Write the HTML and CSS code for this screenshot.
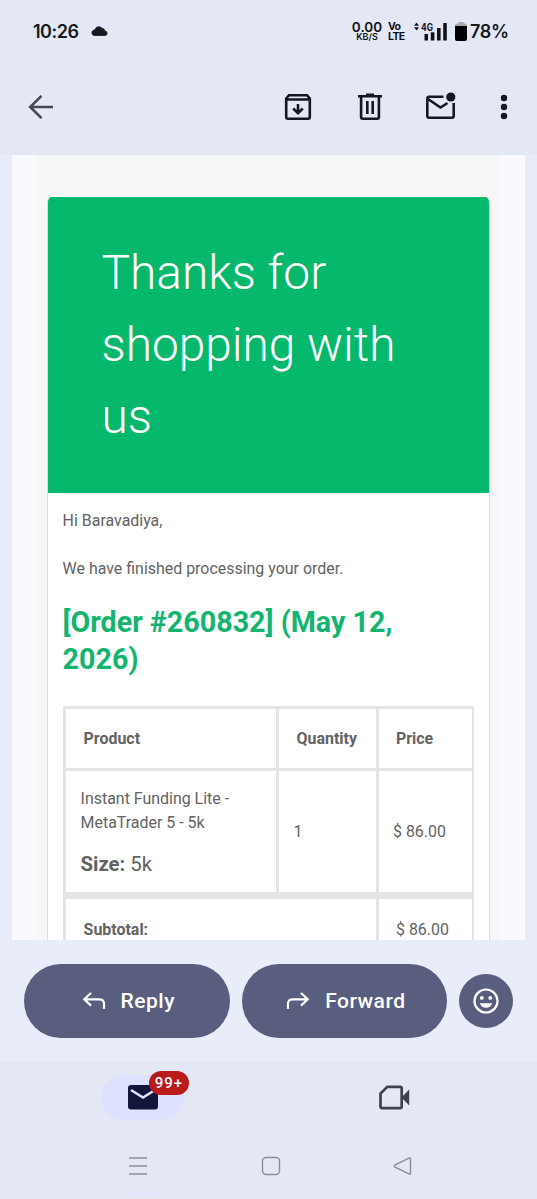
FILE: index.html
```html
<!DOCTYPE html>
<html lang="en">
<head>
<meta charset="utf-8">
<title>Mail</title>
<link rel="stylesheet" href="styles.css">
</head>
<body>
<div class="screen">
  <header class="top">
    <div class="status">
      <span class="clock">10:26</span>
      <svg class="cloud" width="17" height="10" viewBox="0 0 17 10"><path d="M3 9.500A2.800 2.800 0 0 1 2.600 4.200C3 4 3.500 3.900 3.900 3.900A4 4 0 0 1 11 2.300C12.600 2.300 13.600 3.500 13.800 5A2.300 2.300 0 0 1 14.500 9.500Z" fill="#16191d" stroke="#16191d" stroke-width=".8"/></svg>
      <div class="net"><span class="rate">0.00</span><span class="unit">KB/S</span></div>
      <div class="volte"><span>Vo</span><span>LTE</span></div>
      <svg class="signal" width="34" height="20" viewBox="0 0 34 20"><g fill="#101216"><path d="M0 4.700 2.500 1.400 5 4.700ZM0 6.200 2.500 9.500 5 6.200Z"/><rect x="10.500" y="13" width="3.500" height="6.500"/><rect x="16.800" y="11.300" width="3.600" height="8.200"/><rect x="23" y="7" width="3.600" height="12.500"/><rect x="29.200" y="2" width="3.600" height="17.500"/></g><text class="gen" x="7" y="9.500" textLength="12" lengthAdjust="spacingAndGlyphs">4G</text></svg>
      <svg class="battery" width="12" height="19" viewBox="0 0 12 19"><path d="M3.500 0h5v1.500H10a2 2 0 0 1 2 2V5H0V3.500a2 2 0 0 1 2-2h1.500Z" fill="#a5a7af"/><path d="M0 4h12V17a2 2 0 0 1-2 2H2a2 2 0 0 1-2-2Z" fill="#000"/></svg>
      <span class="percent">78%</span>
    </div>
    <nav class="actions">
      <svg class="back" width="26" height="26" viewBox="0 0 26 26" fill="none" stroke="#444956" stroke-width="2.600"><path d="M25 13H2.500M13.500 1.800 2.200 13 13.500 24.200"/></svg>
      <svg class="archive" width="28" height="28" viewBox="0 0 28 28" fill="none" stroke="#131721" stroke-width="2.600"><path d="M2.200 5.500 5 2.200h18l2.800 3.300V24q0 1.700-1.700 1.700H3.900Q2.200 25.700 2.200 24ZM2.200 6.500h23.600M14 11v9M9.200 15.500 14 20.200l4.800-4.700"/></svg>
      <svg class="trash" width="24" height="28" viewBox="0 0 24 28" fill="none" stroke="#131721" stroke-width="2.600"><path d="M0 3.200h24M8 1.800h8M3.100 3.200V24q0 1.700 1.700 1.700h14.400q1.700 0 1.700-1.700V3.200M9.300 8v13M14.700 8v13"/></svg>
      <svg class="unread" width="31" height="28" viewBox="0 0 31 28"><path d="M18.500 4.700H4q-1.700 0-1.700 1.700V24q0 1.700 1.700 1.700h23q1.700 0 1.700-1.700V11M3 7l12.500 8.500 7-4.500" fill="none" stroke="#131721" stroke-width="2.600"/><circle cx="25.800" cy="5" r="4.600" fill="#131721"/></svg>
      <svg class="more" width="8" height="26" viewBox="0 0 8 26" fill="#131721"><circle cx="4" cy="4" r="3.200"/><circle cx="4" cy="13" r="3.200"/><circle cx="4" cy="22" r="3.200"/></svg>
    </nav>
  </header>

  <main class="message">
    <div class="backdrop">
      <article class="card">
        <h1 class="banner">Thanks for shopping with us</h1>
        <div class="body">
          <p>Hi Baravadiya,</p>
          <p>We have finished processing your order.</p>
          <h2 class="order">[Order #260832] (May 12, 2026)</h2>
          <div class="table">
            <div class="row head"><div class="cell product">Product</div><div class="cell qty">Quantity</div><div class="cell price">Price</div></div>
            <div class="row item"><div class="cell product"><div>Instant Funding Lite - MetaTrader 5 - 5k</div><div class="size"><b>Size:</b> 5k</div></div><div class="cell qty">1</div><div class="cell price">$ 86.00</div></div>
            <div class="row total"><div class="cell label">Subtotal:</div><div class="cell price">$ 86.00</div></div>
          </div>
        </div>
      </article>
    </div>
  </main>

  <div class="replybar">
    <button class="pill"><svg width="24" height="20" viewBox="0 0 24 20" fill="none" stroke="#fff" stroke-width="2.200"><path d="M9 2 2.300 8.300 9 14.600M2.500 8.300H17.500Q22 8.300 22 12.800V18"/></svg><span>Reply</span></button>
    <button class="pill"><svg width="24" height="20" viewBox="0 0 24 20" fill="none" stroke="#fff" stroke-width="2.200"><path d="M15 2 21.700 8.300 15 14.600M21.500 8.300H6.500Q2 8.300 2 12.800V18"/></svg><span>Forward</span></button>
    <button class="emoji"><svg width="26" height="26" viewBox="0 0 26 26"><circle cx="13" cy="13" r="11.500" fill="none" stroke="#fff" stroke-width="2.200"/><circle cx="8.800" cy="9.900" r="1.900" fill="#fff"/><circle cx="17.200" cy="9.900" r="1.900" fill="#fff"/><path d="M6.800 15.200h12.400q-1.700 4.500-6.200 4.500t-6.200-4.500Z" fill="#fff"/></svg></button>
  </div>

  <footer class="bottom">
    <div class="tabs">
      <div class="tab-mail">
        <svg width="30" height="25" viewBox="0 0 30 25"><rect width="30" height="24.500" rx="3" fill="#12163a"/><path d="M3 5 15 12.500 27 5" fill="none" stroke="#dee1ff" stroke-width="2.600"/></svg>
        <span class="badge">99+</span>
      </div>
      <svg class="video" width="31" height="25" viewBox="0 0 31 25"><path d="M8.300 1.800H21q1.700 0 1.700 1.700v18q0 1.700-1.700 1.700H3.200q-1.700 0-1.700-1.700V8.600Z" fill="none" stroke="#3d424e" stroke-width="2.700"/><path d="M22.500 12.500 30.200 4.500v16Z" fill="#3d424e"/></svg>
    </div>
    <div class="system">
      <svg class="menu" width="20" height="20" viewBox="0 0 20 20" stroke="#8b8e98" stroke-width="1.500"><path d="M1 2h18M1 10h18M1 18h18"/></svg>
      <svg class="home" width="20" height="20" viewBox="0 0 20 20" fill="none" stroke="#8b8e98" stroke-width="1.400"><rect x="1.500" y="1.500" width="17" height="17" rx="3.500"/></svg>
      <svg class="prev" width="19" height="20" viewBox="0 0 19 20" fill="none" stroke="#8b8e98" stroke-width="1.400"><path d="M15.900 2.100Q17.500 1.300 17.500 3v14q0 1.700-1.600.9L2.200 11.100q-1.800-1.100 0-2.200Z"/></svg>
    </div>
    <div class="handle"></div>
  </footer>
</div>
</body>
</html>
```
FILE: styles.css
```css
* { box-sizing: border-box; }
body { margin: 0; font-family: Roboto, "Liberation Sans", sans-serif; background: #e9edfa; }
svg { display: block; flex: none; }
h1, h2, p { margin: 0; font-weight: 400; }
.screen { width: 537px; height: 1199px; overflow: hidden; display: flex; flex-direction: column; }

.top { height: 155px; flex: none; background: #e4e8f5; color: #16191d; }
.status { height: 62px; padding-left: 33px; display: flex; align-items: center; font-family: Inter, sans-serif; white-space: nowrap; }
.clock { width: 46px; font-size: 18px; font-weight: 600; letter-spacing: -.5px; }
.cloud { margin-left: 12px; }
.net { width: 30px; margin-left: 244px; display: flex; flex-direction: column; align-items: center; font-weight: 600; }
.rate { font-size: 13.500px; line-height: 12px; }
.unit { font-size: 9px; line-height: 8px; }
.volte { width: 18px; margin-left: 6px; padding-top: 1px; font-size: 10.500px; line-height: 10px; font-weight: 700; letter-spacing: -.6px; display: flex; flex-direction: column; }
.volte, .net { color: #101216; }
.signal { margin-left: 8px; }
.gen { font: 700 10px Inter, sans-serif; fill: #101216; }
.battery { margin-left: 7px; }
.percent { margin-left: 3px; font-size: 18px; font-weight: 600; letter-spacing: -.3px; }
.actions { height: 90px; padding-left: 28px; display: flex; align-items: center; }
.archive { margin-left: 230px; }
.trash { margin-left: 46px; }
.unread { margin-left: 43px; margin-top: -3px; }
.more { margin-left: 44px; }

.message { height: 785px; flex: none; margin: 0 12px; padding: 0 24px; background: #faf9ff; overflow: hidden; }
.backdrop { background: #f7f7f7; padding: 42px 11px 0; height: 900px; }
.card { height: 900px; background: #fff; border: 1px solid #dedede; border-top: 0; border-radius: 5px 5px 0 0; overflow: hidden; }
.banner { height: 296px; padding: 40px 53.500px; background: #05b86c; color: #fff; font-size: 47.800px; line-height: 72px; font-weight: 300; }
.body { padding: 16px 15px 0 14.600px; color: #636363; font-size: 15.950px; line-height: 24px; }
.body p { margin-bottom: 24px; }
.order { margin-top: -1px; color: #13b470; font-size: 28.700px; line-height: 37px; font-weight: 700; }
.table { width: 411px; margin-top: 28px; padding: 3px 2px 0 3px; background: #e4e4e4; }
.row { display: flex; gap: 3px; }
.cell { background: #fff; display: flex; align-items: center; }
.product { width: 210px; }
.qty { width: 97px; }
.price { width: 93px; }
.head { height: 59px; font-weight: 700; }
.head .cell, .total .cell { padding-left: 18px; }
.item { height: 121px; margin-top: 3px; }
.item .cell { padding-left: 15px; }
.head .price, .total .price { padding-left: 17.400px; }
.item .price { padding-left: 14.400px; }
.item .product { flex-direction: column; align-items: flex-start; justify-content: center; padding-top: 2px; }
.size { margin-top: 14px; font-size: 20.300px; line-height: 30px; }
.total { height: 61px; margin-top: 7px; }
.label { width: 310px; font-weight: 700; }

.replybar { height: 121px; flex: none; padding: 0 24px; display: flex; align-items: center; gap: 12px; }
.replybar button { border: 0; padding: 0; background: #595d7e; color: #fff; display: flex; align-items: center; justify-content: center; }
.replybar .pill { width: 206px; height: 74px; padding-left: 3px; border-radius: 37px; gap: 15px; font: 500 21px Roboto, sans-serif; letter-spacing: .5px; }
.replybar .emoji { width: 54px; height: 54px; border-radius: 50%; }

.bottom { height: 138px; flex: none; background: #e4e8f5; }
.tabs { height: 74px; padding: 14px 0 0 101px; display: flex; align-items: flex-start; }
.tab-mail { position: relative; width: 83px; height: 45px; border-radius: 23px; background: #dee1ff; display: flex; align-items: center; justify-content: center; }
.badge { position: absolute; left: 48px; top: -4px; width: 40px; height: 24px; border-radius: 12px; background: #ba1a1a; color: #fff; font-size: 15px; line-height: 24px; font-weight: 500; text-align: center; letter-spacing: 1px; }
.video { margin: 10px 0 0 195px; }
.system { height: 58px; padding: 21px 0 0 128px; display: flex; }
.home { margin-left: 113px; }
.prev { margin-left: 112px; }
.handle { width: 54px; height: 1px; margin: 0 0 0 115px; background: #dde1fb; }
```
